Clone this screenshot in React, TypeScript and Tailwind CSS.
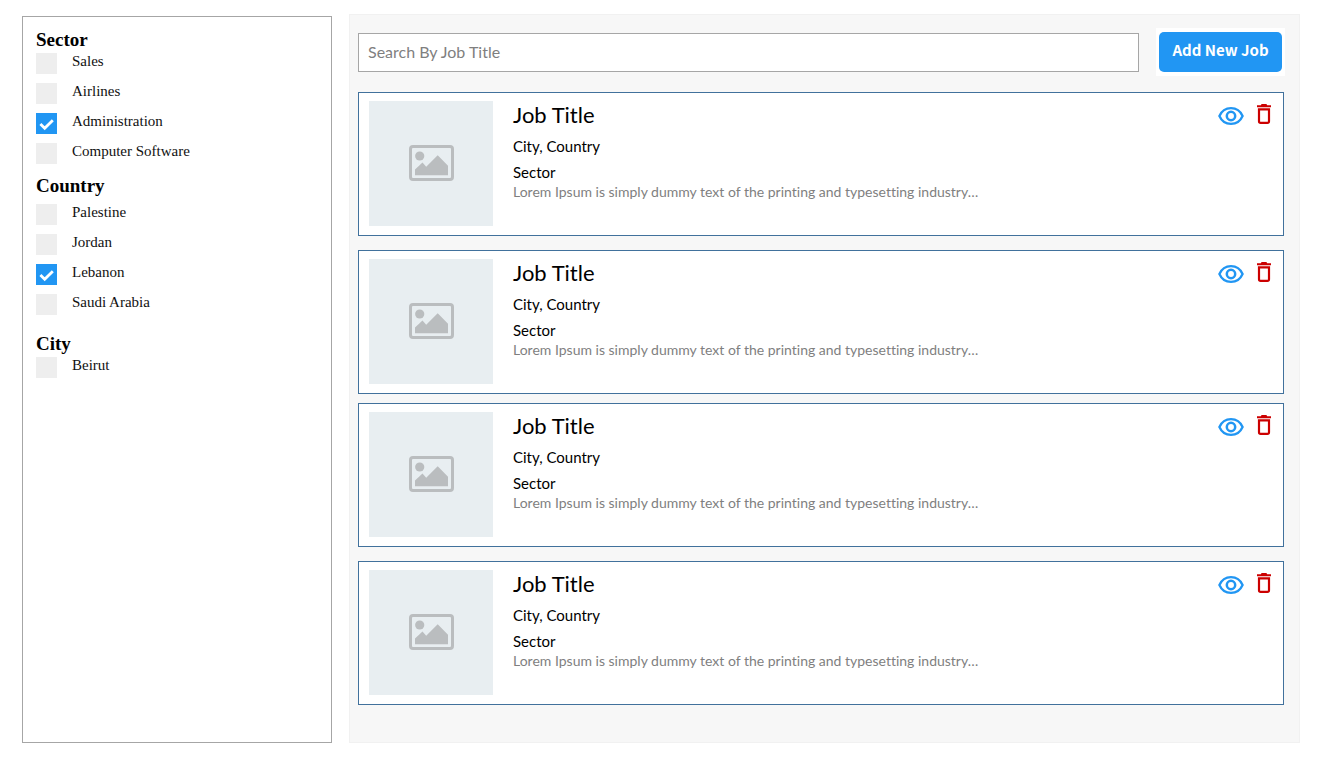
import { useState } from "react";

type FilterGroup = { name: string; options: string[]; spacing: string; headingHeight: string };

const filterGroups: FilterGroup[] = [
  { name: "Sector", options: ["Sales", "Airlines", "Administration", "Computer Software"], spacing: "mt-[10px]", headingHeight: "h-[26px]" },
  { name: "Country", options: ["Palestine", "Jordan", "Lebanon", "Saudi Arabia"], spacing: "mt-0", headingHeight: "h-[31px]" },
  { name: "City", options: ["Beirut"], spacing: "mt-[7px]", headingHeight: "h-[26px]" },
];

const jobGroups = [
  [1, 2],
  [3, 4],
];

function FilterOption({ label, checked, onToggle }: { label: string; checked: boolean; onToggle: () => void }) {
  return (
    <label className="flex h-[30px] cursor-pointer items-start gap-[15px]">
      <span className="grid size-[21px] shrink-0">
        <input
          type="checkbox"
          checked={checked}
          onChange={onToggle}
          className="col-start-1 row-start-1 size-[21px] cursor-pointer appearance-none bg-[#eeeeee] checked:bg-[#2196f3]"
        />
        {checked && (
          <svg viewBox="0 0 21 21" className="pointer-events-none col-start-1 row-start-1 size-[21px]" aria-hidden="true">
            <path d="M4.4 11 L8.7 15.2 L16.8 7.2" fill="none" stroke="#fff" strokeWidth="2.8" />
          </svg>
        )}
      </span>
      <span className="text-[15px] leading-4 text-[#111111]">{label}</span>
    </label>
  );
}

function PictureIcon() {
  return (
    <svg viewBox="0 0 45 36" className="h-9 w-[45px]" aria-hidden="true">
      <rect x="1.5" y="1.5" width="42" height="33" rx="2.5" fill="none" stroke="#babdbf" strokeWidth="3" />
      <circle cx="10.7" cy="11" r="4.6" fill="#babdbf" />
      <path d="M6 30.3V24.6L13.5 17.6L17.2 21.8L28.7 10.3L39 20.7V30.3Z" fill="#babdbf" />
    </svg>
  );
}

function EyeIcon() {
  return (
    <svg viewBox="0 0 26 20" className="h-5 w-[26px]" aria-hidden="true" fill="none" stroke="#2196f3">
      <path d="M1.4 10C3.6 5 8 2.1 13 2.1S22.4 5 24.6 10C22.4 15 18 17.9 13 17.9S3.6 15 1.4 10Z" strokeWidth="2.3" />
      <circle cx="13" cy="10" r="4.2" strokeWidth="2.5" />
    </svg>
  );
}

function TrashIcon() {
  return (
    <svg viewBox="0 0 16 20" className="h-5 w-4" aria-hidden="true">
      <path d="M1 1.2H4.8L5.6 0H10.4L11.2 1.2H15V3.2H1Z" fill="#cc0000" />
      <path d="M3 5.4H13V17.2Q13 18.8 11.4 18.8H4.6Q3 18.8 3 17.2Z" fill="none" stroke="#cc0000" strokeWidth="2.2" />
    </svg>
  );
}

function JobCard() {
  return (
    <article className="flex items-start border border-[#41719c] bg-white pt-2 pr-[11px] pb-[9px] pl-[10px]">
      <div className="flex h-[125px] w-[124px] shrink-0 items-center justify-center bg-[#e8eef1] pb-px">
        <PictureIcon />
      </div>
      <div className="ml-5 min-w-0 flex-1 [font-variant-ligatures:none]">
        <h2 className="mb-[2px] text-[22px] leading-[28px]">Job Title</h2>
        <p className="text-[15px] leading-[30px]">City, Country</p>
        <p className="text-[15px] leading-[22px]">Sector</p>
        <p className="text-[14px] leading-[18px] text-[#7f7f7f]">
          Lorem Ipsum is simply dummy text of the printing and typesetting industry…
        </p>
      </div>
      <div className="flex items-start gap-3 pt-[3px]">
        <button type="button" aria-label="View job" className="cursor-pointer pt-[2px]">
          <EyeIcon />
        </button>
        <button type="button" aria-label="Delete job" className="cursor-pointer">
          <TrashIcon />
        </button>
      </div>
    </article>
  );
}

export default function App() {
  const [selected, setSelected] = useState<string[]>(["Administration", "Lebanon"]);
  const toggle = (option: string) =>
    setSelected((current) =>
      current.includes(option) ? current.filter((item) => item !== option) : [...current, option],
    );

  return (
    <div className="flex gap-[17px] bg-white pt-[14px] pr-[26px] pb-[14px] pl-[22px] font-['Lato',sans-serif] text-black">
      <aside className="mt-[2px] w-[310px] shrink-0 border border-[#a6a6a6] pl-[13px] font-['Liberation_Serif',serif]">
        {filterGroups.map((group) => (
          <section key={group.name} className={group.spacing}>
            <h2 className={`${group.headingHeight} text-[19px] leading-[26px] font-bold`}>{group.name}</h2>
            {group.options.map((option) => (
              <FilterOption
                key={option}
                label={option}
                checked={selected.includes(option)}
                onToggle={() => toggle(option)}
              />
            ))}
          </section>
        ))}
      </aside>

      <main className="min-w-0 flex-1 border border-[#f1f1f1] bg-[#f7f7f7] pt-[13px] pr-[14px] pb-[37px] pl-2">
        <div className="flex items-center gap-[17px]">
          <input
            type="search"
            aria-label="Search By Job Title"
            placeholder="Search By Job Title"
            className="mt-px h-[39px] min-w-0 flex-1 border border-[#a6a6a6] bg-white px-[9px] pb-[2px] text-[16px] placeholder:text-[#7f7f7f]"
          />
          <div className="bg-white px-[3px] py-1">
            <button
              type="button"
              className="block h-10 w-[123px] cursor-pointer rounded-[5px] bg-[#2196f3] pb-1 font-['Noto_Sans_CJK_SC',sans-serif] text-[15px] leading-[20px] font-bold whitespace-nowrap text-white"
            >
              Add New Job
            </button>
          </div>
        </div>

        <div className="mt-4 mr-px flex flex-col gap-[9px]">
          {jobGroups.map((jobs) => (
            <div key={jobs[0]} className="flex flex-col gap-[14px]">
              {jobs.map((job) => (
                <JobCard key={job} />
              ))}
            </div>
          ))}
        </div>
      </main>
    </div>
  );
}
